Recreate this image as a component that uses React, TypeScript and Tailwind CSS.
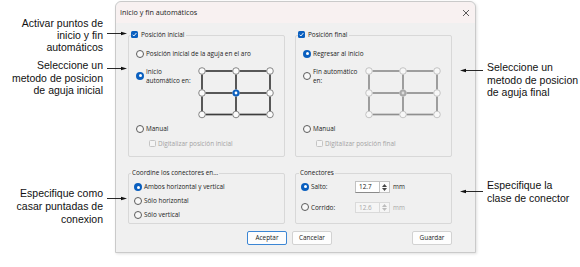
import React from "react";

const ui = "font-['Open_Sans','Noto_Sans',sans-serif]";

function Arrow({ width, left }: { width: number; left?: boolean }) {
  return (
    <svg width={width} height="5" viewBox={`0 0 ${width} 5`}>
      {left ? (
        <>
          <line x1="5" y1="2.5" x2={width} y2="2.5" stroke="#111" strokeWidth="0.9" />
          <polygon points="0,2.5 6,0.8 6,4.2" fill="#111" />
        </>
      ) : (
        <>
          <line x1="0" y1="2.5" x2={width - 5} y2="2.5" stroke="#111" strokeWidth="0.9" />
          <polygon points={`${width},2.5 ${width - 6},0.8 ${width - 6},4.2`} fill="#111" />
        </>
      )}
    </svg>
  );
}

function Radio({ on, off }: { on?: boolean; off?: boolean }) {
  if (on) {
    return (
      <span className="flex h-[8px] w-[8px] shrink-0 items-center justify-center rounded-full bg-[#0a5fbf]">
        <span className="h-[3px] w-[3px] rounded-full bg-white" />
      </span>
    );
  }
  return (
    <span
      className={
        off
          ? "h-[8px] w-[8px] shrink-0 rounded-full border border-[#b9b9b9] bg-[#f6f6f6]"
          : "h-[8px] w-[8px] shrink-0 rounded-full border border-[#5c5c5c] bg-[#f8f8f8]"
      }
    />
  );
}

function Check({ on, off }: { on?: boolean; off?: boolean }) {
  if (on) {
    return (
      <span className="flex h-[7px] w-[7px] shrink-0 items-center justify-center rounded-[1.5px] bg-[#0a5fbf]">
        <svg width="7" height="7" viewBox="0 0 7 7">
          <polyline points="1.6,3.7 2.9,5 5.4,2" fill="none" stroke="white" strokeWidth="0.9" />
        </svg>
      </span>
    );
  }
  return (
    <span
      className={
        off
          ? "h-[7px] w-[7px] shrink-0 rounded-[1.5px] border border-[#c4c4c4] bg-[#f4f4f4]"
          : "h-[7px] w-[7px] shrink-0 rounded-[1.5px] border border-[#5c5c5c] bg-white"
      }
    />
  );
}

function PosGrid({ disabled }: { disabled?: boolean }) {
  const xs = [4, 38, 72];
  const ys = [4, 26, 47.5];
  const line = disabled ? "#8f8f8f" : "#3d3d3d";
  const ring = disabled ? "#b8b8b8" : "#6a6a6a";
  return (
    <svg width="76" height="52" viewBox="0 0 76 52" className="shrink-0">
      {ys.map((y) => (
        <g key={"h" + y} stroke={line} strokeWidth="1.7">
          <line x1="7.5" y1={y} x2="34.5" y2={y} />
          <line x1="41.5" y1={y} x2="68.5" y2={y} />
        </g>
      ))}
      {xs.map((x) => (
        <g key={"v" + x} stroke={line} strokeWidth="1.7">
          <line x1={x} y1="7.5" x2={x} y2="22.5" />
          <line x1={x} y1="29.5" x2={x} y2="44" />
        </g>
      ))}
      {ys.map((y) =>
        xs.map((x) =>
          x === 38 && y === 26 ? (
            <g key={x + "-" + y}>
              <circle cx={x} cy={y} r="3.6" fill={disabled ? "#a9a9a9" : "#0a5fbf"} />
              <circle cx={x} cy={y} r="1.4" fill={disabled ? "#dcdcdc" : "#ffffff"} />
            </g>
          ) : (
            <circle
              key={x + "-" + y}
              cx={x}
              cy={y}
              r="3.3"
              fill={disabled ? "#f7f7f7" : "#fbfbfb"}
              stroke={ring}
              strokeWidth="0.8"
            />
          )
        )
      )}
    </svg>
  );
}

function Spin({ value, off }: { value: string; off?: boolean }) {
  return (
    <div className="flex h-full">
      <div
        className={
          off
            ? "flex w-[25px] items-center border border-[#dadada] bg-[#f5f5f5] pl-[3px] text-[#a8a8a8]"
            : "flex w-[25px] items-center border border-[#c2c2c2] border-b-[#8a8a8a] bg-white pl-[3px]"
        }
      >
        {value}
      </div>
      <div
        className={
          off
            ? "flex w-[10px] flex-col items-center justify-center gap-[1px] border border-l-0 border-[#dadada] bg-[#f5f5f5]"
            : "flex w-[10px] flex-col items-center justify-center gap-[1px] border border-l-0 border-[#c2c2c2] bg-[#fbfbfb]"
        }
      >
        <svg width="5" height="3" viewBox="0 0 5 3">
          <polygon points="2.5,0 5,3 0,3" fill={off ? "#bdbdbd" : "#444"} />
        </svg>
        <svg width="5" height="3" viewBox="0 0 5 3">
          <polygon points="0,0 5,0 2.5,3" fill={off ? "#bdbdbd" : "#444"} />
        </svg>
      </div>
    </div>
  );
}

export default function App() {
  return (
    <div className="flex h-[267px] w-[580px] overflow-hidden bg-white text-[#111] font-['Liberation_Sans',Arial,sans-serif]">
      <aside className="relative z-10 flex w-[115px] shrink-0 flex-col pr-[12px] text-right text-[10.5px]">
        <div className="relative mt-[17px] leading-[12px]">
          Activar puntos de
          <br />
          inicio y fin
          <br />
          automáticos
          <div className="absolute left-[107px] top-[13.5px] flex">
            <Arrow width={20} />
          </div>
        </div>
        <div className="relative mt-[6px] leading-[12.5px]">
          Seleccione un
          <br />
          metodo de posicion
          <br />
          de aguja inicial
          <div className="absolute left-[107px] top-[6.5px] flex">
            <Arrow width={20} />
          </div>
        </div>
        <div className="relative mt-[90px] leading-[13px]">
          Especifique como
          <br />
          casar puntadas de
          <br />
          conexion
          <div className="absolute left-[107px] top-[9px] flex">
            <Arrow width={20} />
          </div>
        </div>
      </aside>

      <div
        className={`mt-[1px] flex h-[252px] w-[361px] shrink-0 flex-col rounded-t-[6px] border border-[#cacaca] bg-[#f0f0f0] text-[6.4px] text-[#1b1b1b] shadow-[1px_1px_3px_rgba(0,0,0,0.12)] ${ui}`}
      >
        <div className="flex h-[21px] items-center justify-between rounded-t-[6px] bg-[#f8f1f1] pl-[4px] pr-[5px] text-[7.2px]">
          <span>Inicio y fin automáticos</span>
          <svg width="8" height="8" viewBox="0 0 8 8">
            <path d="M1 1 L7 7 M7 1 L1 7" stroke="#333" strokeWidth="0.8" />
          </svg>
        </div>

        <div className="flex flex-col pl-[12px]">
          <div className="mt-[12px] flex gap-[10px]">
            <div className="relative h-[122px] w-[157px] rounded-[2px] border border-[#d8d8d8] pl-[7px] pt-[13px]">
              <div className="absolute left-[2px] top-[-6px] flex h-[9px] items-center gap-[3px] bg-[#f0f0f0] pr-[2px]">
                <Check on />
                <span>Posición inicial</span>
              </div>
              <div className="flex h-[9px] items-center gap-[2px]">
                <Radio />
                <span>Posición inicial de la aguja en el aro</span>
              </div>
              <div className="mt-[8.5px] flex items-start">
                <div className="flex w-[62px] items-center gap-[2px]">
                  <Radio on />
                  <span className="leading-[9px]">
                    Inicio
                    <br />
                    automático en:
                  </span>
                </div>
                <PosGrid />
              </div>
              <div className="mt-[6px] flex h-[9px] items-center gap-[2px]">
                <Radio />
                <span>Manual</span>
              </div>
              <div className="ml-[13px] mt-[5.5px] flex h-[9px] items-center gap-[2px] text-[#a3a3a3]">
                <Check off />
                <span>Digitalizar posición inicial</span>
              </div>
            </div>

            <div className="relative h-[122px] w-[157px] rounded-[2px] border border-[#d8d8d8] pl-[7px] pt-[13px]">
              <div className="absolute left-[2px] top-[-6px] flex h-[9px] items-center gap-[3px] bg-[#f0f0f0] pr-[2px]">
                <Check on />
                <span>Posición final</span>
              </div>
              <div className="flex h-[9px] items-center gap-[2px]">
                <Radio on />
                <span>Regresar al inicio</span>
              </div>
              <div className="mt-[8.5px] flex items-start">
                <div className="flex w-[62px] items-center gap-[2px]">
                  <Radio />
                  <span className="leading-[9px]">
                    Fin automático
                    <br />
                    en:
                  </span>
                </div>
                <PosGrid disabled />
              </div>
              <div className="mt-[6px] flex h-[9px] items-center gap-[2px]">
                <Radio />
                <span>Manual</span>
              </div>
              <div className="ml-[13px] mt-[5.5px] flex h-[9px] items-center gap-[2px] text-[#a3a3a3]">
                <Check off />
                <span>Digitalizar posición final</span>
              </div>
            </div>
          </div>

          <div className="mt-[16px] flex gap-[10px]">
            <div className="relative flex h-[51px] w-[157px] flex-col gap-[5px] rounded-[2px] border border-[#d8d8d8] pl-[5px] pt-[8.5px]">
              <div className="absolute left-[2px] top-[-5.5px] flex h-[9px] items-center bg-[#f0f0f0] px-[1px]">
                Coordine los conectores en…
              </div>
              <div className="flex h-[9px] items-center gap-[2px]">
                <Radio on />
                <span>Ambos horizontal y vertical</span>
              </div>
              <div className="flex h-[9px] items-center gap-[2px]">
                <Radio />
                <span>Sólo horizontal</span>
              </div>
              <div className="flex h-[9px] items-center gap-[2px]">
                <Radio />
                <span>Sólo vertical</span>
              </div>
            </div>

            <div className="relative h-[51px] w-[157px] rounded-[2px] border border-[#d8d8d8] pl-[5px] pt-[7px]">
              <div className="absolute left-[3px] top-[-5.5px] flex h-[9px] items-center bg-[#f0f0f0] px-[1px]">
                Conectores
              </div>
              <div className="flex h-[12px] items-center">
                <div className="flex w-[54px] items-center gap-[2px]">
                  <Radio on />
                  <span>Salto:</span>
                </div>
                <Spin value="12.7" />
                <span className="ml-[3px]">mm</span>
              </div>
              <div className="mt-[9px] flex h-[11px] items-center">
                <div className="flex w-[54px] items-center gap-[2px]">
                  <Radio />
                  <span>Corrido:</span>
                </div>
                <Spin value="12.6" off />
                <span className="ml-[3px] text-[#a8a8a8]">mm</span>
              </div>
            </div>
          </div>

          <div className="mt-[7px] flex h-[14px] w-[324px]">
            <button className="ml-[119px] w-[40px] rounded-[2px] border border-[#3c86d4] bg-[#fdfdfd]">
              Aceptar
            </button>
            <button className="ml-[5px] w-[40px] rounded-[2px] border border-[#d2d2d2] bg-[#fdfdfd]">
              Cancelar
            </button>
            <button className="ml-auto w-[40px] rounded-[2px] border border-[#d2d2d2] bg-[#fdfdfd]">
              Guardar
            </button>
          </div>
        </div>
      </div>

      <aside className="relative z-10 flex flex-1 flex-col text-[10.5px]">
        <div className="relative mt-[61px] pl-[11px] leading-[12.5px]">
          Seleccione un
          <br />
          metodo de posicion
          <br />
          de aguja final
          <div className="absolute left-[-16px] top-[7px] flex">
            <Arrow width={23} left />
          </div>
        </div>
        <div className="relative mt-[80px] pl-[11px] leading-[13px]">
          Especifique la
          <br />
          clase de conector
          <div className="absolute left-[-16px] top-[10px] flex">
            <Arrow width={23} left />
          </div>
        </div>
      </aside>
    </div>
  );
}
